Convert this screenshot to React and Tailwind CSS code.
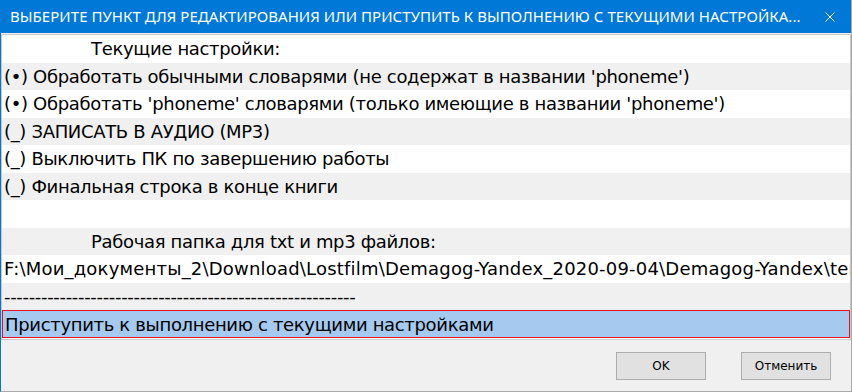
import React from "react";

const rows = [
  { text: "Текущие настройки:", indent: true },
  { text: "(•) Обработать обычными словарями (не содержат в названии 'phoneme')" },
  { text: "(•) Обработать 'phoneme' словарями (только имеющие в названии 'phoneme')" },
  { text: "(_) ЗАПИСАТЬ В АУДИО (MP3)" },
  { text: "(_) Выключить ПК по завершению работы" },
  { text: "(_) Финальная строка в конце книги" },
  { text: "" },
  { text: "Рабочая папка для txt и mp3 файлов:", indent: true },
  { text: "F:\\Мои_документы_2\\Download\\Lostfilm\\Demagog-Yandex_2020-09-04\\Demagog-Yandex\\temp", wide: true },
  { text: "---------------------------------------------------------" },
];

function CloseIcon(props) {
  return (
    <svg viewBox="0 0 10 10" fill="none" stroke="currentColor" strokeWidth="1" {...props}>
      <path d="M0.5 0.5L9.5 9.5M9.5 0.5L0.5 9.5" />
    </svg>
  );
}

export default function App() {
  return (
    <div className="w-[852px] h-[392px] bg-[#f0f0f0] flex flex-col overflow-hidden border-l border-[#0078d7] border-r border-r-[#aaaaaa] border-b border-b-[#aaaaaa] font-['DejaVu_Sans',sans-serif]">
      <div className="h-[33px] -ml-px bg-[#0078d7] text-white flex items-center shrink-0">
        <div className="pl-[10px] text-[15px] whitespace-nowrap overflow-hidden flex-1 font-['Noto_Sans',sans-serif] tracking-[0.05px]">
          ВЫБЕРИТЕ ПУНКТ ДЛЯ РЕДАКТИРОВАНИЯ ИЛИ ПРИСТУПИТЬ К ВЫПОЛНЕНИЮ С ТЕКУЩИМИ НАСТРОЙКА...
        </div>
        <div className="w-[42px] flex justify-center items-center">
          <CloseIcon className="w-[10px] h-[10px]" />
        </div>
      </div>
      <div className="mt-px border border-[#c8c8c8] bg-white h-[306px] shrink-0 overflow-hidden">
        {rows.map((r, i) => (
          <div
            key={i}
            className={`h-[27.5px] flex items-center whitespace-nowrap overflow-hidden text-[18px] text-black ${r.wide ? "tracking-[0.2px]" : "tracking-[-0.33px]"} ${i % 2 === 1 ? "bg-[#f0f0f0]" : "bg-white"} ${r.indent ? "pl-[89px]" : "pl-[2px]"}`}
          >
            {r.text}
          </div>
        ))}
        <div className="h-[28px] flex items-center whitespace-nowrap overflow-hidden text-[18px] text-black tracking-[-0.33px] bg-[#a6c9ef] border border-[#e81123] pl-[2px]">
          Приступить к выполнению с текущими настройками
        </div>
      </div>
      <div className="flex-1 flex justify-end items-start gap-[35px] pt-[12px] pr-[20px]">
        <button className="w-[90px] h-[28px] bg-[#e1e1e1] border border-[#adadad] text-[12px] text-black">
          OK
        </button>
        <button className="w-[90px] h-[28px] bg-[#e1e1e1] border border-[#adadad] text-[12px] text-black">
          Отменить
        </button>
      </div>
    </div>
  );
}
